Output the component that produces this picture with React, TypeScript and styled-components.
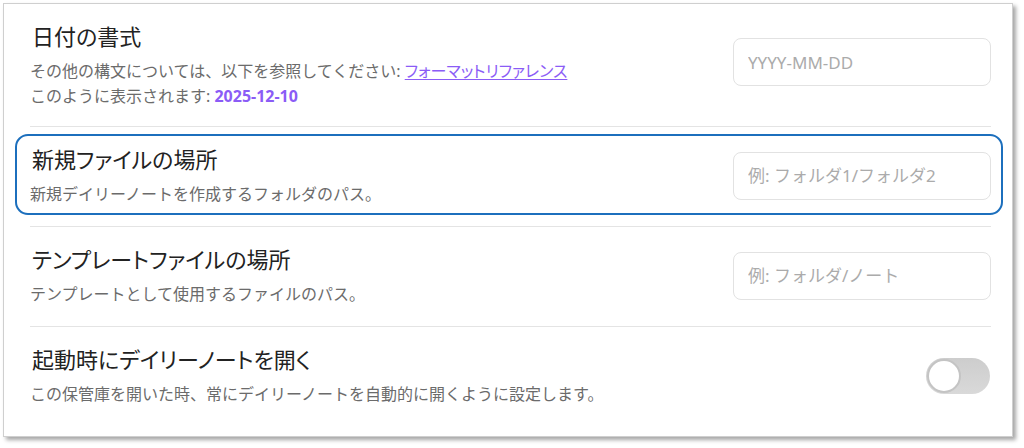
import React, { FunctionComponent } from "react";
import styled, { createGlobalStyle } from "styled-components";

const GlobalStyle = createGlobalStyle`
  html, body {
    margin: 0;
    padding: 0;
    background: #ffffff;
  }
  body {
    font-family: "Noto Sans", "Noto Sans CJK JP", sans-serif;
  }
`;

const Page = styled.div`
  width: 1024px;
  height: 448px;
  padding: 3px 0 0 3px;
  box-sizing: border-box;
`;

const Panel = styled.div`
  width: 1010px;
  height: 434px;
  box-sizing: border-box;
  border: 1px solid #cfcfcf;
  background: #ffffff;
  box-shadow: 3px 3px 4px rgba(0, 0, 0, 0.35);
  padding: 0 21px 8px 26px;
  display: flex;
  flex-direction: column;
`;

const Row = styled.div<{ $first?: boolean; $highlighted?: boolean }>`
  position: relative;
  display: flex;
  flex-direction: row;
  justify-content: space-between;
  align-items: center;
  padding: 17px 0 ${(p) => (p.$first ? "17px" : "19px")} 0;
  border-top: ${(p) => (p.$first ? "none" : "1px solid #e4e4e4")};

  ${(p) =>
    p.$highlighted &&
    `
    &::after {
      content: "";
      position: absolute;
      top: 7px;
      bottom: 11px;
      left: -15px;
      right: -12px;
      border: 2px solid #1c6fbd;
      border-radius: 13px;
      pointer-events: none;
    }
  `}
`;

const Info = styled.div`
  display: flex;
  flex-direction: column;
  gap: 8px;
`;

const Title = styled.div`
  font-size: 22px;
  line-height: 30px;
  color: #222222;
  padding-left: 2px;
  font-feature-settings: "palt";
`;

const Desc = styled.div`
  font-size: 16px;
  line-height: 25px;
  color: #6b6b6b;
`;

const Link = styled.a`
  color: #8b5cf6;
  text-decoration: underline;
  text-underline-offset: 2px;
  font-feature-settings: "palt";
  cursor: pointer;
`;

const Accent = styled.span`
  color: #8b5cf6;
  font-weight: 700;
`;

const TextInput = styled.input<{ $lift?: boolean }>`
  width: 258px;
  height: 48px;
  box-sizing: border-box;
  border: 1px solid #e2e2e2;
  border-radius: 8px;
  padding: 0 14px;
  font-family: "Noto Sans", "Noto Sans CJK JP", sans-serif;
  font-size: 17px;
  color: #333333;
  background: #ffffff;
  outline: none;
  flex-shrink: 0;
  margin-top: ${(p) => (p.$lift ? "-6px" : "0")};
  &::placeholder {
    color: #ababab;
  }
`;

const Toggle = styled.div`
  width: 64px;
  height: 36px;
  border-radius: 18px;
  background: linear-gradient(180deg, #cdcdcd 0%, #d9d9d9 100%);
  position: relative;
  flex-shrink: 0;
  margin-right: 1px;
`;

const Knob = styled.div`
  position: absolute;
  top: 1px;
  left: 1px;
  width: 34px;
  height: 34px;
  box-sizing: border-box;
  border-radius: 50%;
  background: #ffffff;
  border: 2px solid #c4c4c4;
`;

type SettingProps = {
  title: string;
  first?: boolean;
  highlighted?: boolean;
  children: React.ReactNode;
  control: React.ReactNode;
};

const Setting: FunctionComponent<SettingProps> = ({
  title,
  first,
  highlighted,
  children,
  control,
}) => {
  return (
    <Row $first={first} $highlighted={highlighted}>
      <Info>
        <Title>{title}</Title>
        {children}
      </Info>
      {control}
    </Row>
  );
};

const App: FunctionComponent = () => {
  return (
    <>
      <GlobalStyle />
      <Page>
        <Panel>
          <Setting
            first
            title="日付の書式"
            control={<TextInput $lift placeholder="YYYY-MM-DD" />}
          >
            <Desc>
              その他の構文については、以下を参照してください:{" "}
              <Link>フォーマットリファレンス</Link>
              <br />
              このように表示されます: <Accent>2025-12-10</Accent>
            </Desc>
          </Setting>
          <Setting
            highlighted
            title="新規ファイルの場所"
            control={<TextInput placeholder="例: フォルダ1/フォルダ2" />}
          >
            <Desc>新規デイリーノートを作成するフォルダのパス。</Desc>
          </Setting>
          <Setting
            title="テンプレートファイルの場所"
            control={<TextInput placeholder="例: フォルダ/ノート" />}
          >
            <Desc>テンプレートとして使用するファイルのパス。</Desc>
          </Setting>
          <Setting
            title="起動時にデイリーノートを開く"
            control={
              <Toggle>
                <Knob />
              </Toggle>
            }
          >
            <Desc>
              この保管庫を開いた時、常にデイリーノートを自動的に開くように設定します。
            </Desc>
          </Setting>
        </Panel>
      </Page>
    </>
  );
};

export default App;
